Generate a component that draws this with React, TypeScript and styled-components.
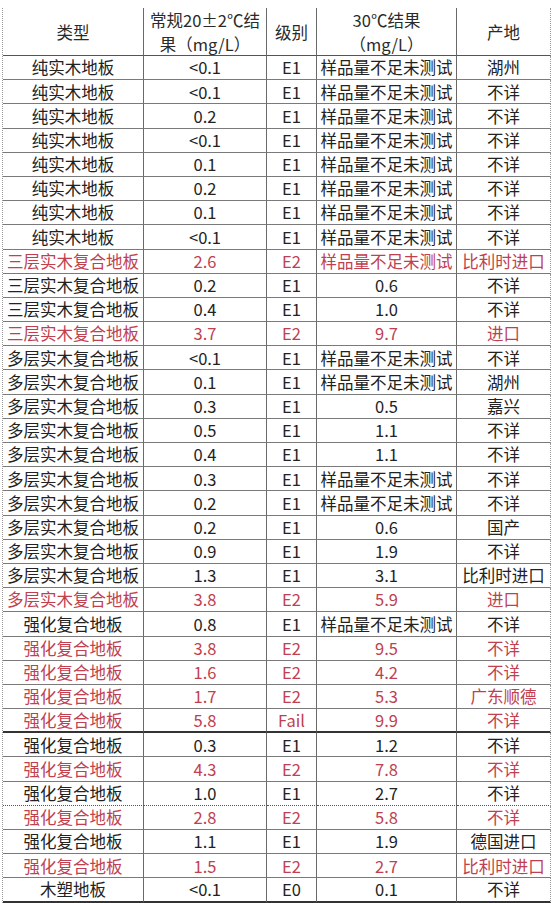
import React from "react"
import styled, { createGlobalStyle } from "styled-components"

type Row = {
  kind: string
  normal: string
  grade: string
  hot: string
  origin: string
  red?: boolean
  rule?: "dotted" | "thick"
}

const SAMPLE = "样品量不足未测试"

const rows: Row[] = [
  { kind: "纯实木地板", normal: "<0.1", grade: "E1", hot: SAMPLE, origin: "湖州" },
  { kind: "纯实木地板", normal: "<0.1", grade: "E1", hot: SAMPLE, origin: "不详" },
  { kind: "纯实木地板", normal: "0.2", grade: "E1", hot: SAMPLE, origin: "不详" },
  { kind: "纯实木地板", normal: "<0.1", grade: "E1", hot: SAMPLE, origin: "不详" },
  { kind: "纯实木地板", normal: "0.1", grade: "E1", hot: SAMPLE, origin: "不详" },
  { kind: "纯实木地板", normal: "0.2", grade: "E1", hot: SAMPLE, origin: "不详" },
  { kind: "纯实木地板", normal: "0.1", grade: "E1", hot: SAMPLE, origin: "不详" },
  { kind: "纯实木地板", normal: "<0.1", grade: "E1", hot: SAMPLE, origin: "不详" },
  { kind: "三层实木复合地板", normal: "2.6", grade: "E2", hot: SAMPLE, origin: "比利时进口", red: true },
  { kind: "三层实木复合地板", normal: "0.2", grade: "E1", hot: "0.6", origin: "不详" },
  { kind: "三层实木复合地板", normal: "0.4", grade: "E1", hot: "1.0", origin: "不详" },
  { kind: "三层实木复合地板", normal: "3.7", grade: "E2", hot: "9.7", origin: "进口", red: true },
  { kind: "多层实木复合地板", normal: "<0.1", grade: "E1", hot: SAMPLE, origin: "不详" },
  { kind: "多层实木复合地板", normal: "0.1", grade: "E1", hot: SAMPLE, origin: "湖州" },
  { kind: "多层实木复合地板", normal: "0.3", grade: "E1", hot: "0.5", origin: "嘉兴" },
  { kind: "多层实木复合地板", normal: "0.5", grade: "E1", hot: "1.1", origin: "不详" },
  { kind: "多层实木复合地板", normal: "0.4", grade: "E1", hot: "1.1", origin: "不详" },
  { kind: "多层实木复合地板", normal: "0.3", grade: "E1", hot: SAMPLE, origin: "不详" },
  { kind: "多层实木复合地板", normal: "0.2", grade: "E1", hot: SAMPLE, origin: "不详" },
  { kind: "多层实木复合地板", normal: "0.2", grade: "E1", hot: "0.6", origin: "国产" },
  { kind: "多层实木复合地板", normal: "0.9", grade: "E1", hot: "1.9", origin: "不详" },
  { kind: "多层实木复合地板", normal: "1.3", grade: "E1", hot: "3.1", origin: "比利时进口" },
  { kind: "多层实木复合地板", normal: "3.8", grade: "E2", hot: "5.9", origin: "进口", red: true },
  { kind: "强化复合地板", normal: "0.8", grade: "E1", hot: SAMPLE, origin: "不详" },
  { kind: "强化复合地板", normal: "3.8", grade: "E2", hot: "9.5", origin: "不详", red: true },
  { kind: "强化复合地板", normal: "1.6", grade: "E2", hot: "4.2", origin: "不详", red: true },
  { kind: "强化复合地板", normal: "1.7", grade: "E2", hot: "5.3", origin: "广东顺德", red: true },
  { kind: "强化复合地板", normal: "5.8", grade: "Fail", hot: "9.9", origin: "不详", red: true, rule: "thick" },
  { kind: "强化复合地板", normal: "0.3", grade: "E1", hot: "1.2", origin: "不详" },
  { kind: "强化复合地板", normal: "4.3", grade: "E2", hot: "7.8", origin: "不详", red: true },
  { kind: "强化复合地板", normal: "1.0", grade: "E1", hot: "2.7", origin: "不详", rule: "dotted" },
  { kind: "强化复合地板", normal: "2.8", grade: "E2", hot: "5.8", origin: "不详", red: true },
  { kind: "强化复合地板", normal: "1.1", grade: "E1", hot: "1.9", origin: "德国进口" },
  { kind: "强化复合地板", normal: "1.5", grade: "E2", hot: "2.7", origin: "比利时进口", red: true },
  { kind: "木塑地板", normal: "<0.1", grade: "E0", hot: "0.1", origin: "不详", rule: "thick" },
]

function App() {
  return (
    <>
      <GlobalStyle />
      <Sheet>
        <HeadCell>类型</HeadCell>
        <HeadCell>
          常规20±2℃结
          <br />
          果（mg/L）
        </HeadCell>
        <HeadCell>级别</HeadCell>
        <HeadCell>
          30℃结果
          <br />
          （mg/L）
        </HeadCell>
        <HeadCell $last>产地</HeadCell>
        {rows.map((row, i) => (
          <React.Fragment key={i}>
            <Cell $red={row.red} $rule={row.rule}>{row.kind}</Cell>
            <Cell $red={row.red} $rule={row.rule}>{row.normal}</Cell>
            <Cell $red={row.red} $rule={row.rule}>{row.grade}</Cell>
            <Cell $red={row.red} $rule={row.rule}>{row.hot}</Cell>
            <Cell $red={row.red} $rule={row.rule} $last>{row.origin}</Cell>
          </React.Fragment>
        ))}
      </Sheet>
    </>
  )
}

const GlobalStyle = createGlobalStyle`
  body {
    margin: 0;
    background: #ffffff;
    font-family: "Noto Sans CJK SC", "Noto Sans", sans-serif;
  }
`

const Sheet = styled.div`
  display: grid;
  grid-template-columns: 141px 123px 50px 140px 94px;
  grid-template-rows: 48px;
  grid-auto-rows: 24.2px;
  margin: 8px 0 0 2px;
  width: 549px;
  border-left: 1px dotted #9a9a9a;
  color: #222222;
  font-size: 16.5px;
`

const HeadCell = styled.div<{ $last?: boolean }>`
  display: flex;
  align-items: center;
  justify-content: center;
  text-align: center;
  line-height: 24px;
  border-right: 1px ${(p) => (p.$last ? "dotted #9a9a9a" : "solid #6a6a6a")};
  border-bottom: 1px solid #555555;
  color: #2a2a2a;
  white-space: nowrap;
`

const Cell = styled.div<{ $red?: boolean; $last?: boolean; $rule?: "dotted" | "thick" }>`
  display: flex;
  align-items: center;
  justify-content: center;
  line-height: 1;
  white-space: nowrap;
  overflow: hidden;
  color: ${(p) => (p.$red ? "#c0404f" : "#222222")};
  border-right: 1px ${(p) => (p.$last ? "dotted #9a9a9a" : "solid #6a6a6a")};
  border-bottom: ${(p) =>
    p.$rule === "dotted"
      ? "1px dotted #555555"
      : p.$rule === "thick"
      ? "2px solid #333333"
      : "1px solid #7a7a7a"};
`

export default App
